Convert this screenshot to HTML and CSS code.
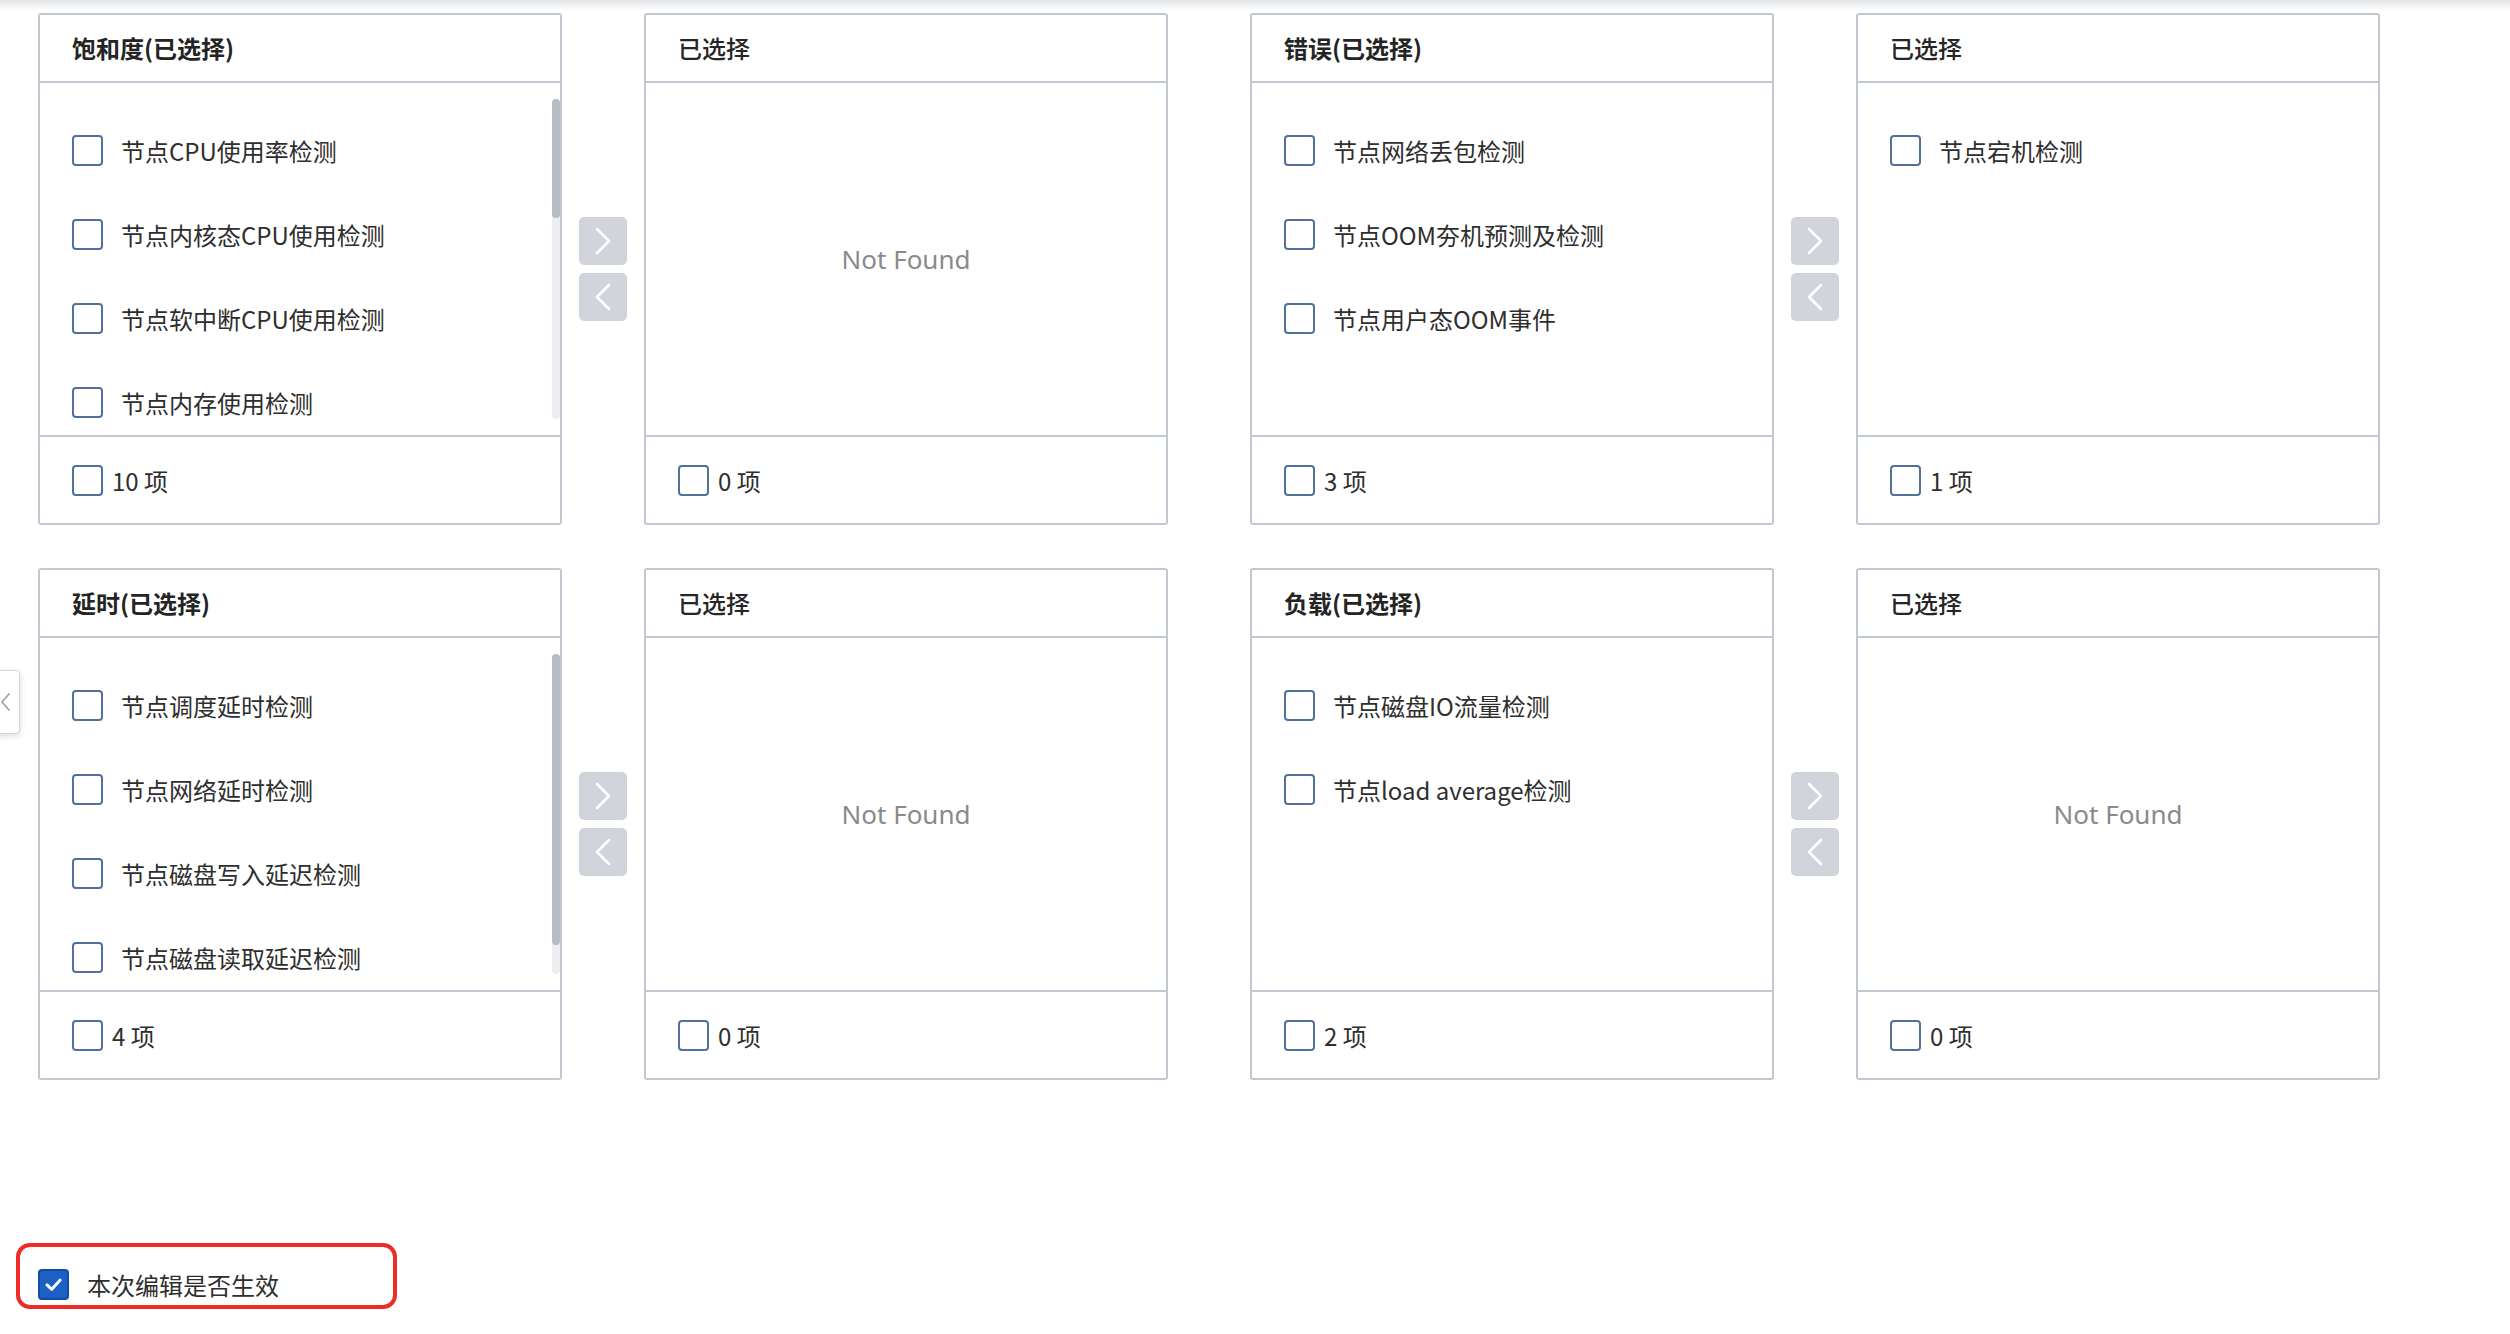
FILE: index.html
```html
<!DOCTYPE html>
<html lang="zh-CN">
<head>
<meta charset="utf-8">
<title>检测项配置</title>
<link rel="stylesheet" href="styles.css">
</head>
<body>
<div class="top-shade"></div>
<div class="grid">
  <!-- 饱和度 -->
  <div class="transfer">
    <div class="panel">
      <div class="panel-head strong">饱和度(已选择)</div>
      <div class="panel-body">
        <div class="scroll-area">
          <div class="list">
            <label class="item"><span class="cb"></span><span>节点CPU使用率检测</span></label>
            <label class="item"><span class="cb"></span><span>节点内核态CPU使用检测</span></label>
            <label class="item"><span class="cb"></span><span>节点软中断CPU使用检测</span></label>
            <label class="item"><span class="cb"></span><span>节点内存使用检测</span></label>
          </div>
          <div class="sbar"><div class="thumb" style="height:119px"></div></div>
        </div>
      </div>
      <div class="panel-foot"><span class="cb"></span><span>10 项</span></div>
    </div>
    <div class="ops">
      <div class="op"><svg viewBox="0 0 48 48"><path d="M18 12 L30 24 L18 36"/></svg></div>
      <div class="op"><svg viewBox="0 0 48 48"><path d="M30 12 L18 24 L30 36"/></svg></div>
    </div>
    <div class="panel">
      <div class="panel-head">已选择</div>
      <div class="panel-body empty"><span>Not Found</span></div>
      <div class="panel-foot"><span class="cb"></span><span>0 项</span></div>
    </div>
  </div>

  <!-- 错误 -->
  <div class="transfer">
    <div class="panel">
      <div class="panel-head strong">错误(已选择)</div>
      <div class="panel-body">
        <div class="scroll-area">
          <div class="list">
            <label class="item"><span class="cb"></span><span>节点网络丢包检测</span></label>
            <label class="item"><span class="cb"></span><span>节点OOM夯机预测及检测</span></label>
            <label class="item"><span class="cb"></span><span>节点用户态OOM事件</span></label>
          </div>
        </div>
      </div>
      <div class="panel-foot"><span class="cb"></span><span>3 项</span></div>
    </div>
    <div class="ops">
      <div class="op"><svg viewBox="0 0 48 48"><path d="M18 12 L30 24 L18 36"/></svg></div>
      <div class="op"><svg viewBox="0 0 48 48"><path d="M30 12 L18 24 L30 36"/></svg></div>
    </div>
    <div class="panel">
      <div class="panel-head">已选择</div>
      <div class="panel-body">
        <div class="scroll-area">
          <div class="list">
            <label class="item"><span class="cb"></span><span>节点宕机检测</span></label>
          </div>
        </div>
      </div>
      <div class="panel-foot"><span class="cb"></span><span>1 项</span></div>
    </div>
  </div>

  <!-- 延时 -->
  <div class="transfer">
    <div class="panel">
      <div class="panel-head strong">延时(已选择)</div>
      <div class="panel-body">
        <div class="scroll-area">
          <div class="list">
            <label class="item"><span class="cb"></span><span>节点调度延时检测</span></label>
            <label class="item"><span class="cb"></span><span>节点网络延时检测</span></label>
            <label class="item"><span class="cb"></span><span>节点磁盘写入延迟检测</span></label>
            <label class="item"><span class="cb"></span><span>节点磁盘读取延迟检测</span></label>
          </div>
          <div class="sbar"><div class="thumb" style="height:291px"></div></div>
        </div>
      </div>
      <div class="panel-foot"><span class="cb"></span><span>4 项</span></div>
    </div>
    <div class="ops">
      <div class="op"><svg viewBox="0 0 48 48"><path d="M18 12 L30 24 L18 36"/></svg></div>
      <div class="op"><svg viewBox="0 0 48 48"><path d="M30 12 L18 24 L30 36"/></svg></div>
    </div>
    <div class="panel">
      <div class="panel-head">已选择</div>
      <div class="panel-body empty"><span>Not Found</span></div>
      <div class="panel-foot"><span class="cb"></span><span>0 项</span></div>
    </div>
  </div>

  <!-- 负载 -->
  <div class="transfer">
    <div class="panel">
      <div class="panel-head strong">负载(已选择)</div>
      <div class="panel-body">
        <div class="scroll-area">
          <div class="list">
            <label class="item"><span class="cb"></span><span>节点磁盘IO流量检测</span></label>
            <label class="item"><span class="cb"></span><span>节点load average检测</span></label>
          </div>
        </div>
      </div>
      <div class="panel-foot"><span class="cb"></span><span>2 项</span></div>
    </div>
    <div class="ops">
      <div class="op"><svg viewBox="0 0 48 48"><path d="M18 12 L30 24 L18 36"/></svg></div>
      <div class="op"><svg viewBox="0 0 48 48"><path d="M30 12 L18 24 L30 36"/></svg></div>
    </div>
    <div class="panel">
      <div class="panel-head">已选择</div>
      <div class="panel-body empty"><span>Not Found</span></div>
      <div class="panel-foot"><span class="cb"></span><span>0 项</span></div>
    </div>
  </div>
</div>

<div class="confirm">
  <span class="cb checked"><svg viewBox="0 0 31 31"><path d="M8 16 L13.5 21 L23 10.5"/></svg></span>
  <span class="confirm-text">本次编辑是否生效</span>
</div>

<div class="side-tab"><svg viewBox="0 0 12 24"><path d="M9 4 L2 12 L9 20"/></svg></div>
</body>
</html>
```

FILE: styles.css
```css
html, body {
  margin: 0;
  padding: 0;
  background: #ffffff;
}

body {
  font-family: "Noto Sans CJK SC", "Noto Sans", sans-serif;
  font-size: 24px;
  color: #2e2e2e;
  width: 2510px;
  height: 1334px;
  overflow: hidden;
}

.top-shade {
  height: 13px;
  background: linear-gradient(to bottom, #e2e3e5 0, #eff0f1 4px, #ffffff 11px);
}

.grid {
  margin-left: 38px;
  display: grid;
  grid-template-columns: 1130px 1130px;
  column-gap: 82px;
  row-gap: 43px;
}

.transfer {
  display: flex;
}

.panel {
  width: 524px;
  height: 512px;
  box-sizing: border-box;
  border: 2px solid #c2c8d1;
  border-radius: 3px;
  display: flex;
  flex-direction: column;
  background: #fff;
}

.panel-head {
  height: 68px;
  box-sizing: border-box;
  border-bottom: 2px solid #c2c8d1;
  padding: 0 32px 2px;
  display: flex;
  align-items: center;
  font-weight: 500;
  color: #262626;
}

.panel-head.strong {
  font-weight: 700;
  color: #242424;
}

.panel-body {
  height: 354px;
  box-sizing: border-box;
  padding: 16px 0 16px;
  border-bottom: 2px solid #c2c8d1;
}

.panel-body.empty {
  display: flex;
  align-items: center;
  justify-content: center;
  padding: 0;
  color: #8a8a8a;
  font-size: 26px;
  font-family: "Noto Sans", "Noto Sans CJK SC", sans-serif;
}

.scroll-area {
  height: 320px;
  display: flex;
}

.list {
  flex: 1;
  overflow: hidden;
  padding-top: 9px;
}

.item {
  height: 84px;
  display: flex;
  align-items: center;
  gap: 18px;
  padding-left: 32px;
  white-space: nowrap;
}

.sbar {
  width: 8px;
  background: #eceef1;
  border-radius: 4px;
}

.thumb {
  width: 8px;
  background: #b4bcc6;
  border-radius: 4px;
}

.panel-foot {
  flex: 1;
  display: flex;
  align-items: center;
  gap: 9px;
  padding-left: 32px;
}

.cb {
  width: 31px;
  height: 31px;
  box-sizing: border-box;
  border: 2px solid #52719a;
  border-radius: 4px;
  background: #fff;
  flex: none;
  display: inline-flex;
}

.ops {
  width: 82px;
  display: flex;
  flex-direction: column;
  align-items: center;
  justify-content: center;
  gap: 8px;
}

.op {
  width: 48px;
  height: 48px;
  border-radius: 5px;
  background: #d1d5db;
  display: flex;
}

.op svg {
  width: 48px;
  height: 48px;
}

.op path {
  fill: none;
  stroke: #ffffff;
  stroke-width: 2.6;
  stroke-linecap: round;
  stroke-linejoin: round;
}

.confirm {
  margin-top: 163px;
  margin-left: 16px;
  width: 381px;
  height: 66px;
  box-sizing: border-box;
  border: 4px solid #ec2c25;
  border-radius: 14px;
  padding: 22px 0 5px 18px;
  display: flex;
  align-items: flex-start;
  gap: 18px;
}

.cb.checked {
  background: #1b60c2;
  border-color: #0f4ea6;
}

.cb.checked svg {
  width: 27px;
  height: 27px;
}

.cb.checked path {
  fill: none;
  stroke: #ffffff;
  stroke-width: 3.4;
  stroke-linecap: round;
  stroke-linejoin: round;
}

.confirm-text {
  line-height: 31px;
  color: #2e2e2e;
}

.side-tab {
  position: fixed;
  left: -8px;
  top: 670px;
  width: 28px;
  height: 64px;
  box-sizing: border-box;
  background: #fff;
  border: 1px solid #d3d6db;
  border-radius: 4px;
  box-shadow: 0 2px 6px rgba(0, 0, 0, 0.15);
  display: flex;
  align-items: center;
  padding-left: 7px;
}

.side-tab svg {
  width: 12px;
  height: 24px;
}

.side-tab path {
  fill: none;
  stroke: #a0a4aa;
  stroke-width: 1.8;
  stroke-linecap: round;
  stroke-linejoin: round;
}
```
